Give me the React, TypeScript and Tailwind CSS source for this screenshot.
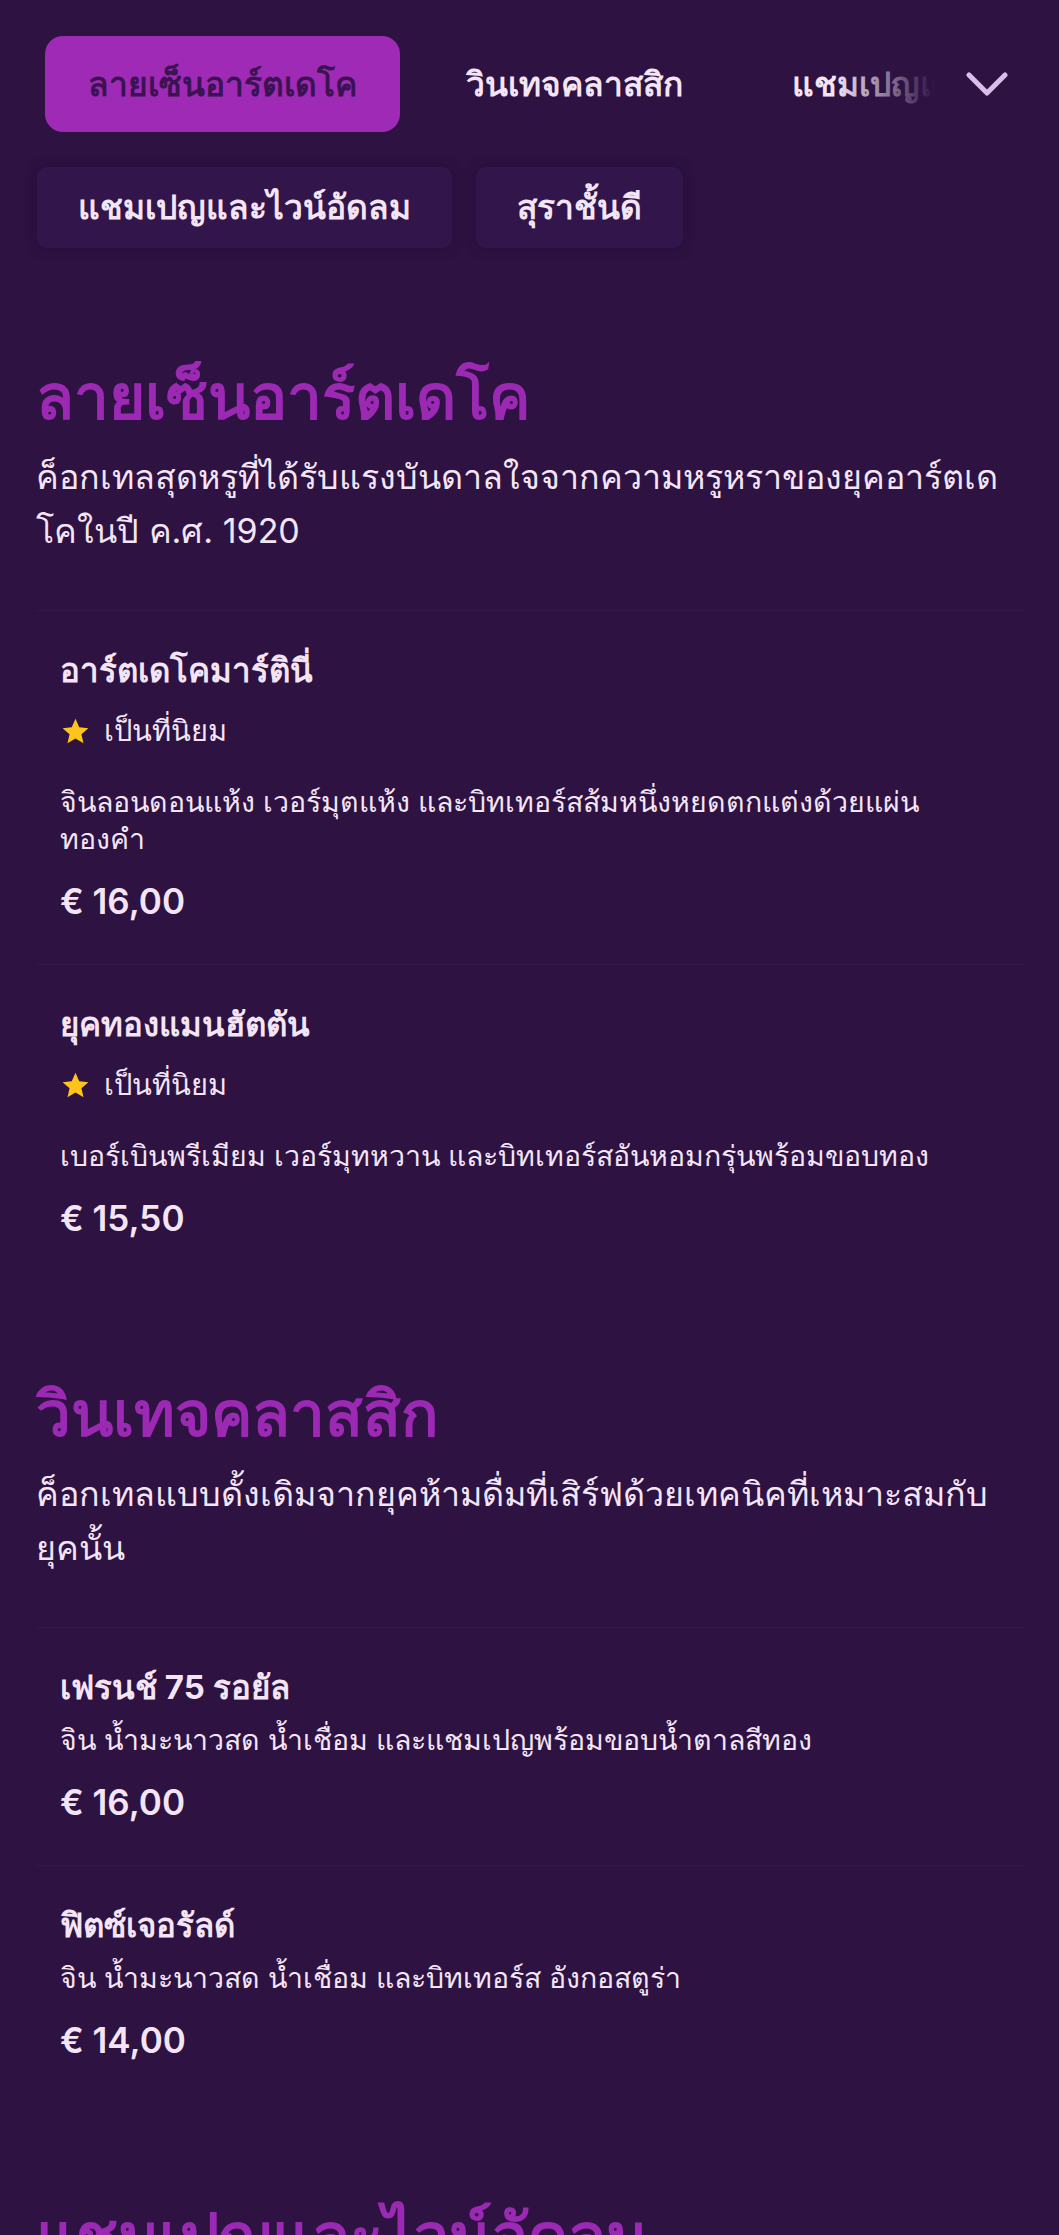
import React from "react";

const FONT = "font-['Inter',sans-serif]";

type Item = { name: string; popular?: boolean; desc: string; price: string };
type Section = { title: string; desc: string; items: Item[] };

const sections: Section[] = [
  {
    title: "ลายเซ็นอาร์ตเดโค",
    desc: "ค็อกเทลสุดหรูที่ได้รับแรงบันดาลใจจากความหรูหราของยุคอาร์ตเดโคในปี ค.ศ. 1920",
    items: [
      {
        name: "อาร์ตเดโคมาร์ตินี่",
        popular: true,
        desc: "จินลอนดอนแห้ง เวอร์มุตแห้ง และบิทเทอร์สส้มหนึ่งหยดตกแต่งด้วยแผ่นทองคำ",
        price: "€ 16,00",
      },
      {
        name: "ยุคทองแมนฮัตตัน",
        popular: true,
        desc: "เบอร์เบินพรีเมียม เวอร์มุทหวาน และบิทเทอร์สอันหอมกรุ่นพร้อมขอบทอง",
        price: "€ 15,50",
      },
    ],
  },
  {
    title: "วินเทจคลาสสิก",
    desc: "ค็อกเทลแบบดั้งเดิมจากยุคห้ามดื่มที่เสิร์ฟด้วยเทคนิคที่เหมาะสมกับยุคนั้น",
    items: [
      {
        name: "เฟรนช์ 75 รอยัล",
        desc: "จิน น้ำมะนาวสด น้ำเชื่อม และแชมเปญพร้อมขอบน้ำตาลสีทอง",
        price: "€ 16,00",
      },
      {
        name: "ฟิตซ์เจอรัลด์",
        desc: "จิน น้ำมะนาวสด น้ำเชื่อม และบิทเทอร์ส อังกอสตูร่า",
        price: "€ 14,00",
      },
    ],
  },
  {
    title: "แชมเปญและไวน์อัดลม",
    desc: "ฟองอันหรูหราสำหรับการเฉลิมฉลองทุกโอกาส",
    items: [],
  },
];

function Star() {
  return (
    <svg width="31" height="31" viewBox="0 0 24 24" className="shrink-0">
      <path
        d="M12 2.2l2.9 6.6 7.1.6-5.4 4.7 1.6 7-6.2-3.7-6.2 3.7 1.6-7L2 9.4l7.1-.6z"
        fill="#fcc41c"
      />
    </svg>
  );
}

function MenuItem({ item }: { item: Item }) {
  return (
    <div className="border-t border-[#35184b] px-[24px] pt-[39px] pb-[41px]">
      <div className="text-[33px] leading-[40px] font-bold text-[#f3e5f5]">{item.name}</div>
      {item.popular && (
        <div className="mt-[21px] mb-[32px] flex items-center gap-[13px] text-[29px] leading-[40px] text-[#f3e5f5]">
          <Star />
          <span>เป็นที่นิยม</span>
        </div>
      )}
      <div className={`${item.popular ? "" : "mt-[14px]"} text-[28.5px] leading-[37px] text-[#f3e5f5] pr-[40px]`}>
        {item.desc}
      </div>
      <div className="mt-[22px] text-[35px] leading-[44px] font-semibold text-[#f3e5f5]">{item.price}</div>
    </div>
  );
}

export default function App() {
  return (
    <div className={`min-h-screen bg-[#2d1242] ${FONT} overflow-hidden`}>
      {/* category nav row */}
      <div className="flex items-center pt-[36px] pl-[45px]">
        <div className="relative w-[890px] overflow-hidden">
          <div className="flex gap-[23px] whitespace-nowrap">
            <div className="h-[96px] flex items-center px-[43px] rounded-[18px] bg-[#9e2ab6] text-[33.5px] font-bold text-[#3a1350]">
              ลายเซ็นอาร์ตเดโค
            </div>
            <div className="h-[96px] flex items-center px-[43px] rounded-[18px] text-[33.5px] font-bold text-[#f3e5f5]">
              วินเทจคลาสสิก
            </div>
            <div className="h-[96px] flex items-center px-[43px] rounded-[18px] text-[33.5px] font-bold text-[#f3e5f5]">
              แชมเปญและไวน์อัดลม
            </div>
          </div>
          <div className="pointer-events-none absolute right-0 top-0 h-full w-[100px] bg-gradient-to-r from-transparent to-[#2d1242]" />
        </div>
        <div className="ml-[31px] flex h-[96px] w-[42px] items-center justify-center">
          <svg width="42" height="24" viewBox="0 0 42 24" fill="none">
            <path d="M3 3l18 18L39 3" stroke="#dcbdea" strokeWidth="5" strokeLinecap="round" strokeLinejoin="round" />
          </svg>
        </div>
      </div>

      {/* second row */}
      <div className="mt-[35px] flex gap-[24px] pl-[37px]">
        <div className="h-[81px] flex items-center px-[41px] rounded-[10px] bg-[#32154a] shadow-[0_0_14px_rgba(20,5,30,0.25)] text-[33.5px] font-bold text-[#f3e5f5]">
          แชมเปญและไวน์อัดลม
        </div>
        <div className="h-[81px] flex items-center px-[41px] rounded-[10px] bg-[#32154a] shadow-[0_0_14px_rgba(20,5,30,0.25)] text-[33.5px] font-bold text-[#f3e5f5]">
          สุราชั้นดี
        </div>
      </div>

      <main className="px-[36px] pt-[113px]">
        {sections.map((s, si) => (
          <section key={si} className={si === 0 ? "" : "mt-[97px]"}>
            <h2 className="text-[62px] leading-[72px] font-bold text-[#9c29b3]">{s.title}</h2>
            <p className="mt-[17px] text-[34px] leading-[54px] text-[#f3e5f5]">{s.desc}</p>
            {s.items.length > 0 && (
              <div className="mt-[52px]">
                {s.items.map((it, ii) => (
                  <MenuItem key={ii} item={it} />
                ))}
              </div>
            )}
          </section>
        ))}
      </main>
    </div>
  );
}
